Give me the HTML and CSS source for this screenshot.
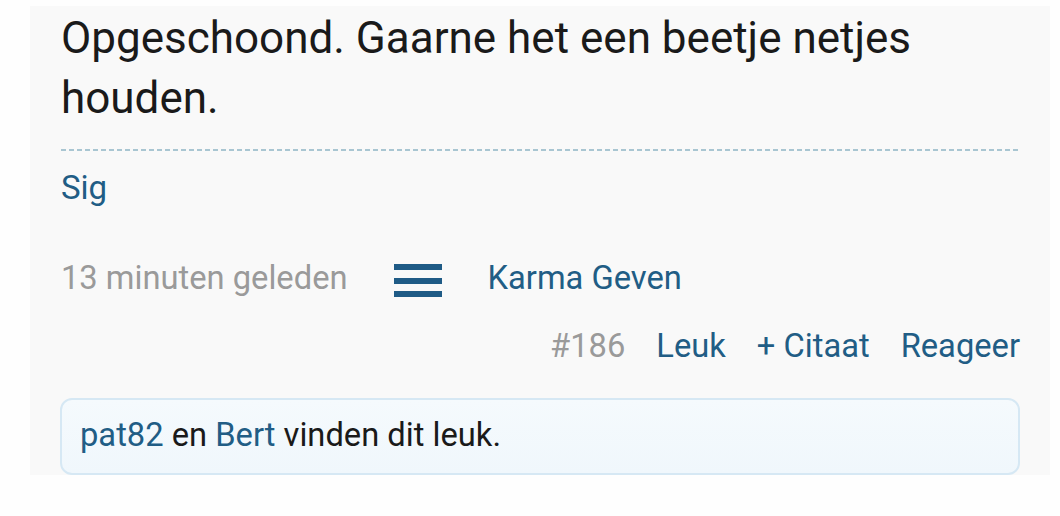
FILE: index.html
```html
<!DOCTYPE html>
<html lang="nl">
<head>
<meta charset="utf-8">
<title>Post</title>
<link rel="stylesheet" href="styles.css">
</head>
<body>
<div class="post">
  <div class="post-body">Opgeschoond. Gaarne het een beetje netjes houden.</div>
  <div class="sig-sep"></div>
  <div class="sig"><a href="#">Sig</a></div>
  <div class="meta">
    <span class="time">13 minuten geleden</span>
    <span class="menu-icon" aria-label="menu"><span></span><span></span><span></span></span>
    <a href="#" class="karma">Karma Geven</a>
  </div>
  <div class="actions">
    <span class="num">#186</span>
    <a href="#">Leuk</a>
    <a href="#">+ Citaat</a>
    <a href="#">Reageer</a>
  </div>
  <div class="likes"><a href="#">pat82</a> en <a href="#">Bert</a> vinden dit leuk.</div>
</div>
</body>
</html>
```

FILE: styles.css
```css
* { box-sizing: border-box; }
html, body { margin: 0; padding: 0; background: #fefefe; }
body {
  font-family: Roboto, "Liberation Sans", sans-serif;
  color: #1a1a1a;
  width: 1060px;
  height: 516px;
  overflow: hidden;
}
a { color: #215d85; text-decoration: none; }

.post {
  margin: 6px 10px 0 30px;
  height: 469px;
  background: #f9f9f9;
  padding: 2px 30px 0 31px;
  overflow: hidden;
}
.post-body {
  font-size: 44px;
  line-height: 60px;
}
.sig-sep {
  margin-top: 21px;
  height: 2px;
  background: repeating-linear-gradient(90deg, #a9c6d2 0 5px, transparent 5px 8px);
}
.sig {
  margin-top: 17px;
  font-size: 33px;
}
.meta {
  margin-top: 52px;
  display: flex;
  align-items: center;
  gap: 46px;
  font-size: 32.7px;
}
.time { color: #9a9a9a; }
.menu-icon {
  display: flex;
  flex-direction: column;
  gap: 7.5px;
  width: 48px;
  margin-top: 5px;
}
.menu-icon span {
  display: block;
  height: 6px;
  background: #1f5b86;
}
.actions {
  margin-top: 30px;
  display: flex;
  justify-content: flex-end;
  gap: 31px;
  font-size: 32.7px;
}
.num { color: #9a9a9a; }
.likes {
  margin-top: 33px;
  margin-left: -1px;
  border: 2px solid #d6e8f4;
  border-radius: 12px;
  background: linear-gradient(#f5fafd, #f0f7fc);
  padding: 16px 18px 19px;
  font-size: 32.7px;
}
```
